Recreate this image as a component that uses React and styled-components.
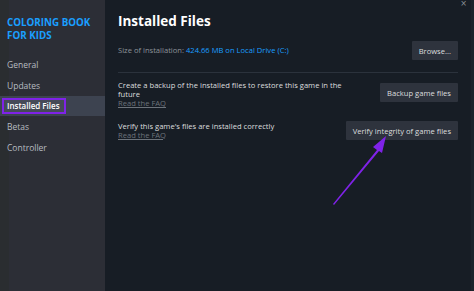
import React from "react";
import styled, { createGlobalStyle } from "styled-components";

const GlobalStyle = createGlobalStyle`
  html, body {
    margin: 0;
    padding: 0;
    background: #171d25;
  }
  * {
    box-sizing: border-box;
  }
`;

const Window = styled.div`
  position: relative;
  display: flex;
  width: 474px;
  height: 291px;
  overflow: hidden;
  font-family: "Open Sans", "Noto Sans", sans-serif;
`;

const Sidebar = styled.nav`
  width: 105px;
  flex-shrink: 0;
  background: #2c2e36;
  border-left: 9px solid #2a2d30;
  padding-top: 16px;
  display: flex;
  flex-direction: column;
`;

const GameTitle = styled.div`
  color: #1a9fff;
  font-weight: 700;
  font-size: 9.8px;
  line-height: 13px;
  margin-left: -2px;
  margin-bottom: 12px;
`;

const NavItem = styled.div`
  height: 20.8px;
  display: flex;
  align-items: center;
  margin-left: -9px;
  padding-left: ${p => (p.active ? "2px" : "7px")};
  font-size: ${p => (p.active ? "8px" : "8.5px")};
  color: ${p => (p.active ? "#ffffff" : "#b7bcc1")};
  font-weight: ${p => (p.active ? 600 : 400)};
  background: ${p => (p.active ? "#3d4350" : "transparent")};
`;

const Highlight = styled.span`
  border: 2px solid #7f22e8;
  padding: 0 4px 0 3px;
  line-height: 12px;
  background: #454b57;
`;

const Main = styled.main`
  flex: 1;
  padding: 11px 13px 0 13px;
  background: #171d25;
  border-right: 3px solid #1a232a;
  display: flex;
  flex-direction: column;
`;

const Title = styled.h1`
  margin: 0 0 10px 0;
  color: #ffffff;
  font-size: 13.5px;
  font-weight: 700;
  line-height: 20px;
`;

const Row = styled.div`
  display: flex;
  align-items: ${p => p.align || "center"};
  justify-content: space-between;
  gap: 12px;
  margin-top: ${p => p.top || 0}px;
`;

const Text = styled.div`
  color: ${p => p.color || "#dcdedf"};
  font-size: 7.6px;
  line-height: 9px;
`;

const Blue = styled.span`
  color: #1a9fff;
`;

const Faq = styled.div`
  color: #6c737b;
  font-size: 7.6px;
  line-height: 9px;
  text-decoration: underline;
`;

const Button = styled.div`
  flex-shrink: 0;
  background: #2e333d;
  color: #dcdedf;
  font-size: 7.6px;
  height: 19px;
  padding: 0 7px;
  margin-top: ${p => p.top || 0}px;
  display: flex;
  align-items: center;
  border-radius: 1px;
`;

const Divider = styled.div`
  height: 1px;
  background: #2b323c;
  margin: 12px 0 8px;
`;

const Close = styled.div`
  position: absolute;
  top: 0;
  right: 7px;
  color: #8b9198;
  font-size: 8px;
  line-height: 8px;
  font-family: "DejaVu Sans", sans-serif;
`;

const Arrow = styled.svg`
  position: absolute;
  left: 0;
  top: 0;
  pointer-events: none;
`;

export default function App() {
  return (
    <>
      <GlobalStyle />
      <Window>
        <Sidebar>
          <GameTitle>
            COLORING BOOK
            <br />
            FOR KIDS
          </GameTitle>
          <NavItem>General</NavItem>
          <NavItem>Updates</NavItem>
          <NavItem active>
            <Highlight>Installed Files</Highlight>
          </NavItem>
          <NavItem>Betas</NavItem>
          <NavItem>Controller</NavItem>
        </Sidebar>
        <Main>
          <Title>Installed Files</Title>
          <Row>
            <Text color="#8d939a">
              Size of installation: <Blue>424.66 MB on Local Drive (C:)</Blue>
            </Text>
            <Button>Browse...</Button>
          </Row>
          <Divider />
          <Row align="flex-start">
            <div>
              <Text>
                Create a backup of the installed files to restore this game in the
                <br />
                future
              </Text>
              <Faq>Read the FAQ</Faq>
            </div>
            <Button top={2}>Backup game files</Button>
          </Row>
          <Row top={13}>
            <div>
              <Text>Verify this game's files are installed correctly</Text>
              <Faq>Read the FAQ</Faq>
            </div>
            <Button>Verify integrity of game files</Button>
          </Row>
        </Main>
        <Close>×</Close>
        <Arrow width="474" height="291" viewBox="0 0 474 291">
          <polygon
            points="333,204 377,150 373,147 386,136 382,153 379,151 334,205"
            fill="#7f22e8"
          />
        </Arrow>
      </Window>
    </>
  );
}
